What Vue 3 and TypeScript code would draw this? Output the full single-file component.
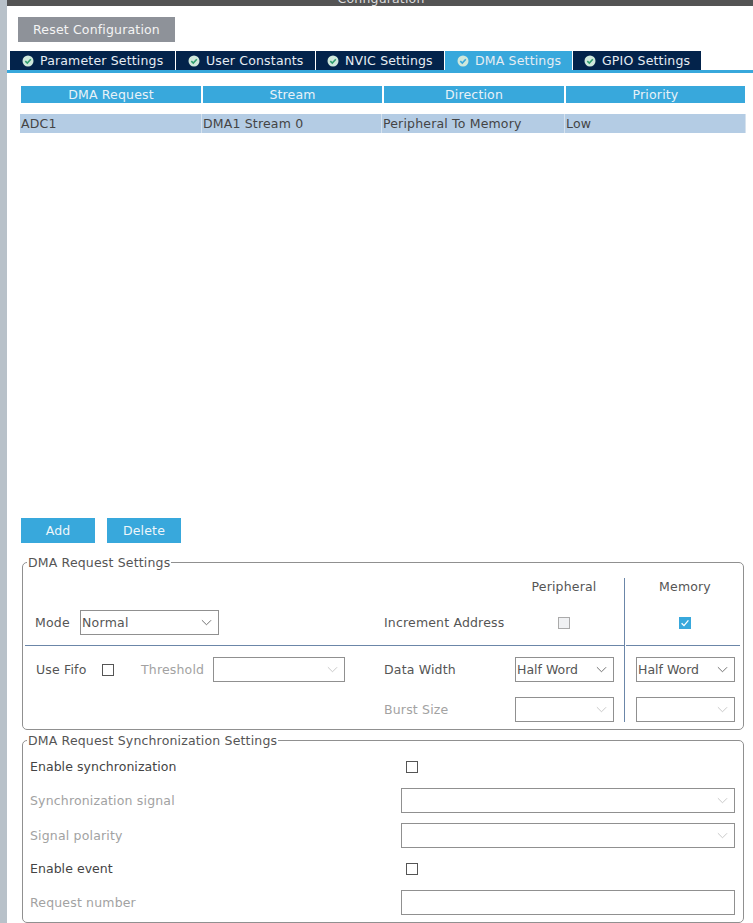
<template>
  <div class="page">
    <div class="topbar"><span class="title">Configuration</span></div>
    <button class="reset">Reset Configuration</button>

    <div class="tabbar" role="tablist">
      <div
        v-for="tab in tabs"
        :key="tab.name"
        class="tab"
        :class="{ active: tab.name === activeTab }"
        :style="{ width: tab.width + 'px', paddingLeft: tab.pad + 'px' }"
        role="tab"
      >
        <svg class="ok" viewBox="0 0 12 12" aria-hidden="true">
          <circle cx="6" cy="6" r="5.5" fill="#cfe8dc" />
          <path d="M3.3 6.1 5.3 8 8.8 4.3" fill="none" :stroke="tab.name === activeTab ? '#38a8dc' : '#2f9e6e'" stroke-width="1.6" />
        </svg>
        <span>{{ tab.name }}</span>
      </div>
    </div>

    <div class="table">
      <div class="thead">
        <div v-for="col in columns" :key="col" class="th">{{ col }}</div>
      </div>
      <div class="tr">
        <div v-for="cell in row" :key="cell" class="td">{{ cell }}</div>
      </div>
    </div>

    <div class="actions">
      <button class="btn">Add</button>
      <button class="btn">Delete</button>
    </div>

    <fieldset class="group first">
      <legend>DMA Request Settings</legend>
      <div class="split">
        <div class="main">
          <div class="upper">
            <div class="head-row"><span class="col-head">Peripheral</span></div>
            <div class="row">
              <div class="left">
                <span class="lbl mode">Mode</span>
                <div class="select mode-sel"><span>Normal</span><svg class="chev" viewBox="0 0 12 7"><path d="M1 1l5 5 5-5" /></svg></div>
              </div>
              <span class="lbl second">Increment Address</span>
              <div class="check-cell"><span class="check off"></span></div>
            </div>
          </div>
          <div class="lower">
            <div class="row">
              <div class="left">
                <span class="lbl fifo">Use Fifo</span>
                <span class="check"></span>
                <span class="lbl dim thresh">Threshold</span>
                <div class="select dis thresh-sel"><svg class="chev" viewBox="0 0 12 7"><path d="M1 1l5 5 5-5" /></svg></div>
              </div>
              <span class="lbl second">Data Width</span>
              <div class="select small"><span>Half Word</span><svg class="chev" viewBox="0 0 12 7"><path d="M1 1l5 5 5-5" /></svg></div>
            </div>
            <div class="row">
              <div class="left"></div>
              <span class="lbl second dim">Burst Size</span>
              <div class="select small dis"><svg class="chev" viewBox="0 0 12 7"><path d="M1 1l5 5 5-5" /></svg></div>
            </div>
          </div>
        </div>
        <div class="side">
          <div class="upper">
            <div class="head-row"><span class="col-head">Memory</span></div>
            <div class="row center">
              <span class="check on">
                <svg viewBox="0 0 12 12"><path d="M2.6 6.2 5 8.6 9.4 3.4" /></svg>
              </span>
            </div>
          </div>
          <div class="lower">
            <div class="row">
              <div class="select small"><span>Half Word</span><svg class="chev" viewBox="0 0 12 7"><path d="M1 1l5 5 5-5" /></svg></div>
            </div>
            <div class="row">
              <div class="select small dis"><svg class="chev" viewBox="0 0 12 7"><path d="M1 1l5 5 5-5" /></svg></div>
            </div>
          </div>
        </div>
      </div>
    </fieldset>

    <fieldset class="group second-group">
      <legend>DMA Request Synchronization Settings</legend>
      <div class="sync">
        <div class="sync-row check-row">
          <span class="lbl strong">Enable synchronization</span>
          <span class="check"></span>
        </div>
        <div class="sync-row gap-wide">
          <span class="lbl dim">Synchronization signal</span>
          <div class="select dis wide"><svg class="chev" viewBox="0 0 12 7"><path d="M1 1l5 5 5-5" /></svg></div>
        </div>
        <div class="sync-row gap-tight">
          <span class="lbl dim">Signal polarity</span>
          <div class="select dis wide"><svg class="chev" viewBox="0 0 12 7"><path d="M1 1l5 5 5-5" /></svg></div>
        </div>
        <div class="sync-row check-row">
          <span class="lbl strong">Enable event</span>
          <span class="check"></span>
        </div>
        <div class="sync-row">
          <span class="lbl dim">Request number</span>
          <div class="select dis wide"></div>
        </div>
      </div>
    </fieldset>
  </div>
</template>

<script setup lang="ts">
const activeTab = 'DMA Settings'
const tabs = [
  { name: 'Parameter Settings', width: 165, pad: 12 },
  { name: 'User Constants', width: 139, pad: 12 },
  { name: 'NVIC Settings', width: 128, pad: 11 },
  { name: 'DMA Settings', width: 127, pad: 12 },
  { name: 'GPIO Settings', width: 128, pad: 11 },
]
const columns = ['DMA Request', 'Stream', 'Direction', 'Priority']
const row = ['ADC1', 'DMA1 Stream 0', 'Peripheral To Memory', 'Low']
</script>

<style>
html, body { margin: 0; background: #fff; }
</style>

<style scoped>
.page {
  box-sizing: border-box;
  width: 753px;
  height: 923px;
  overflow: hidden;
  background: #fff;
  border-left: 7px solid #b8c1c9;
  font-family: "DejaVu Sans", sans-serif;
  font-size: 12.5px;
  letter-spacing: 0.17px;
  color: #555;
}
.topbar { height: 6px; background: #545454; overflow: hidden; display: flex; justify-content: center; }
.title { color: #ddd; line-height: 6px; margin-top: -4px; margin-left: 2px; }
.reset {
  display: block;
  margin: 11px 0 0 11px;
  width: 157px;
  height: 25px;
  padding: 0;
  border: none;
  background: #8e9299;
  color: #f4f4f4;
  font: inherit;
  letter-spacing: inherit;
}
.tabbar {
  display: flex;
  gap: 1px;
  margin-top: 9px;
  padding-left: 3px;
  border-bottom: 3px solid #38a8dc;
}
.tab {
  box-sizing: border-box;
  height: 19px;
  display: flex;
  align-items: center;
  gap: 6px;
  background: #03234b;
  color: #e6edf3;
  white-space: nowrap;
}
.tab.active { background: #38a8dc; }
.ok { width: 12px; height: 12px; flex: none; }
.table { margin: 13px 0 0 13px; width: 726px; }
.thead { display: grid; grid-template-columns: 180px 179px 180px 179px; column-gap: 2px; padding-left: 1px; }
.th { height: 17px; line-height: 17px; text-align: center; background: #38a8dc; color: #e8f2f8; }
.tr { margin-top: 11px; height: 19px; display: grid; grid-template-columns: 182px 180px 183px 1fr; background: #b4cce4; }
.td { line-height: 19px; padding-left: 1px; border-right: 1px solid #d6e2ee; color: #444; white-space: nowrap; overflow: hidden; }
.actions { display: flex; gap: 12px; margin: 385px 0 0 14px; }
.btn {
  width: 74px;
  height: 25px;
  padding: 0;
  border: none;
  background: #38a8dc;
  color: #eef6fa;
  font: inherit;
  letter-spacing: inherit;
}
.group {
  box-sizing: border-box;
  width: 722px;
  margin: 0 0 0 15px;
  padding: 0;
  border: 1px solid #909090;
  border-radius: 5px;
  min-inline-size: 0;
}
.group legend { margin-left: 4px; padding: 0 1px; line-height: 15px; color: #555; }
.first { margin-top: 12px; height: 175px; }
.second-group { margin-top: 3px; height: 190px; }
.split { display: flex; padding: 8px 3px 0 2px; }
.main { width: 599px; border-right: 1px solid #6b86a8; height: 144px; }
.side { flex: 1; margin-left: 1px; }
.upper { height: 68px; box-sizing: border-box; border-bottom: 1px solid #6b86a8; }
.head-row { height: 32px; display: flex; align-items: flex-start; }
.main .head-row { padding-left: 539px; }
.col-head { line-height: 16px; margin-top: 1px; transform: translateX(-50%); white-space: nowrap; }
.side .head-row { padding-left: 59px; }
.row { height: 25px; display: flex; align-items: center; }
.lower { padding-top: 11px; display: flex; flex-direction: column; gap: 15px; }
.left { width: 359px; height: 25px; display: flex; align-items: center; flex: none; }
.lbl { white-space: nowrap; }
.mode { margin-left: 10px; width: 45px; }
.fifo { margin-left: 11px; width: 66px; }
.thresh { margin-left: 27px; width: 72px; }
.second { width: 131px; flex: none; }
.dim { color: #a2a2a2; }
.strong { color: #444; letter-spacing: 0.05px; }
.select {
  box-sizing: border-box;
  height: 25px;
  display: flex;
  align-items: center;
  justify-content: space-between;
  padding: 0 6px 0 1px;
  border: 1px solid #909090;
  background: #fff;
  color: #555;
  white-space: nowrap;
  letter-spacing: 0;
}
.chev { width: 11px; height: 7px; margin-left: auto; flex: none; }
.chev path { fill: none; stroke: #666; stroke-width: 1; }
.dis .chev path { stroke: #c4c4c4; }
.mode-sel { width: 139px; letter-spacing: 0.25px; }
.thresh-sel { width: 132px; }
.small { width: 99px; flex: none; }
.check-cell { width: 98px; display: flex; justify-content: center; }
.check { box-sizing: border-box; display: block; width: 12px; height: 12px; border: 1px solid #555; background: #fff; flex: none; }
.check.off { border-color: #aaa; background: #f0f1f3; }
.check.on { border: none; background: #38a8dc; }
.check.on svg { display: block; width: 12px; height: 12px; }
.check.on path { fill: none; stroke: #fff; stroke-width: 1.3; }
.center { justify-content: center; padding-left: 3px; }
.side .select { margin-left: 10px; }
.sync { padding-top: 6px; }
.sync-row { display: flex; align-items: center; justify-content: space-between; height: 25px; margin-bottom: 9px; padding: 0 8px 0 7px; }
.gap-wide { margin-bottom: 10px; }
.gap-tight { margin-bottom: 8px; }
.check-row { padding-right: 0; justify-content: flex-start; }
.check-row .lbl { width: 376px; }
.wide { width: 334px; }
</style>
